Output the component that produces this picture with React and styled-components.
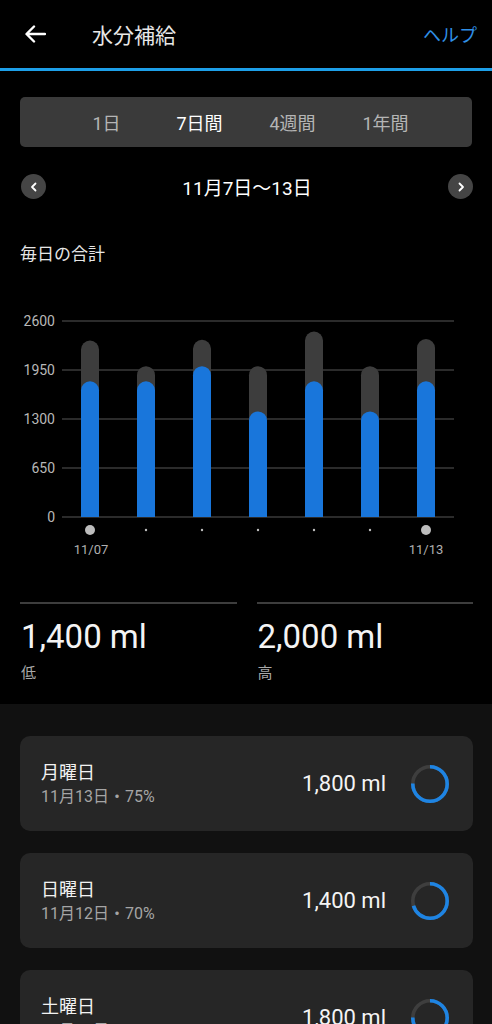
import React from 'react';
import styled, { createGlobalStyle } from 'styled-components';

const GlobalStyle = createGlobalStyle`
  body {
    margin: 0;
    background: #000;
    font-family: Roboto, 'Noto Sans CJK JP', sans-serif;
    color: #fff;
  }
`

const Page = styled.div`
  width: 492px;
  min-height: 1024px;
  background: #000;
  overflow: hidden;
`
const Header = styled.div`
  height: 68px;
  display: flex;
  align-items: center;
  padding: 0 15px 0 24px;
  border-bottom: 3px solid #1d9fe8;
`
const BackButton = styled.div`
  width: 24px;
  height: 24px;
  display: flex;
  align-items: center;
`
const Title = styled.h1`
  margin: 0 0 0 44px;
  font-size: 21px;
  font-weight: 400;
  color: #e8e8e8;
  flex: 1;
`
const Help = styled.span`
  font-size: 18px;
  color: #2f8fe6;
`
const Segment = styled.div`
  margin: 26px 20px 0;
  height: 50px;
  background: #3a3a3a;
  border-radius: 5px;
  display: grid;
  grid-template-columns: repeat(4, 93px);
  justify-content: center;
  align-items: center;
`
const SegItem = styled.span`
  text-align: center;
  font-size: 18px;
  color: ${p => (p.active ? '#fff' : '#b5b5b5')};
`
const DateNav = styled.div`
  margin: 27px 19px 0 21px;
  height: 25px;
  display: flex;
  align-items: center;
  justify-content: space-between;
`
const NavCircle = styled.div`
  width: 25px;
  height: 25px;
  border-radius: 50%;
  background: #454545;
  display: flex;
  align-items: center;
  justify-content: center;
`
const DateText = styled.span`
  font-size: 19px;
  color: #fff;
`
const SectionTitle = styled.h2`
  margin: 43px 0 0 20px;
  font-size: 17px;
  font-weight: 400;
  line-height: 24px;
  color: #e6e6e6;
`
const ChartSvg = styled.svg`
  display: block;
  margin-top: 33px;
`
const Stats = styled.div`
  margin: 41px 19px 0 20px;
  display: grid;
  grid-template-columns: 1fr 1fr;
  column-gap: 20px;
`
const Stat = styled.div`
  border-top: 2px solid #3d3d3d;
  padding: 14px 0 0 1px;
`
const StatValue = styled.div`
  font-size: 33px;
  line-height: 38px;
  color: #f4f4f4;
`
const StatLabel = styled.div`
  font-size: 15px;
  line-height: 22px;
  margin-top: 6px;
  color: #a8a8a8;
`
const Lower = styled.div`
  margin-top: 20px;
  background: #111;
  padding: 32px 19px 40px 20px;
  display: flex;
  flex-direction: column;
  gap: 22px;
`
const Card = styled.div`
  height: 95px;
  background: #262626;
  border-radius: 10px;
  display: flex;
  align-items: center;
  padding: 0 23px 0 21px;
`
const CardText = styled.div`
  flex: 1;
  display: flex;
  flex-direction: column;
`
const CardTitle = styled.span`
  font-size: 18px;
  line-height: 26px;
  color: #f2f2f2;
`
const CardSub = styled.span`
  font-size: 16px;
  line-height: 22px;
  color: #a5a5a5;
`
const CardValue = styled.span`
  font-size: 22px;
  color: #f4f4f4;
  margin-right: 24px;
`

const Arrow = () => (
  <svg width="22" height="20" viewBox="0 0 22 20">
    <path d="M21 10H3M10 2.5L2.5 10L10 17.5" fill="none" stroke="#fff" strokeWidth="2.4" strokeLinecap="round" strokeLinejoin="round" />
  </svg>
)

const Chevron = ({ dir }) => (
  <svg width="10" height="12" viewBox="0 0 10 12">
    <path d={dir === 'left' ? 'M6.5 2.5L3 6l3.5 3.5' : 'M3.5 2.5L7 6 3.5 9.5'} fill="none" stroke="#fff" strokeWidth="1.8" strokeLinecap="round" strokeLinejoin="round" />
  </svg>
)

const Ring = ({ pct }) => {
  const r = 17.2
  const c = 2 * Math.PI * r
  return (
    <svg width="40" height="40" viewBox="0 0 40 40">
      <circle cx="20" cy="20" r={r} fill="none" stroke="#3e3e3e" strokeWidth="3.6" />
      <circle
        cx="20" cy="20" r={r} fill="none" stroke="#1e84e3" strokeWidth="3.6"
        strokeDasharray={`${c * pct} ${c}`} transform="rotate(-90 20 20)"
      />
    </svg>
  )
}

const days = [
  { goal: 2340, val: 1800 },
  { goal: 2000, val: 1800 },
  { goal: 2350, val: 2000 },
  { goal: 2000, val: 1400 },
  { goal: 2460, val: 1800 },
  { goal: 2000, val: 1400 },
  { goal: 2360, val: 1800 },
]
const ticks = [2600, 1950, 1300, 650, 0]
const base = 218
const scale = 196 / 2600

const barPath = (cx, h, w) => {
  const r = w / 2
  const top = base - h
  return `M${cx - r} ${base}V${top + r}A${r} ${r} 0 0 1 ${cx + r} ${top + r}V${base}Z`
}

const Chart = () => (
  <ChartSvg width="492" height="262" viewBox="0 0 492 262">
    {ticks.map((t, i) => (
      <g key={t}>
        <line x1="62" x2="454" y1={22 + i * 49} y2={22 + i * 49} stroke="#3a3a3a" strokeWidth="1.3" />
        <text x="55" y={27 + i * 49} textAnchor="end" fontSize="14" fill="#b8b8b8" fontFamily="Roboto, sans-serif">{t}</text>
      </g>
    ))}
    {days.map((d, i) => {
      const cx = 90 + i * 56
      return (
        <g key={i}>
          <path d={barPath(cx, d.goal * scale, 18)} fill="#3d3d3d" />
          <path d={barPath(cx, d.val * scale, 18)} fill="#1976db" />
          {i === 0 || i === 6
            ? <circle cx={cx} cy="231" r="5" fill="#bdbdbd" />
            : <circle cx={cx} cy="231" r="1.2" fill="#bdbdbd" />}
        </g>
      )
    })}
    <text x="91" y="255" textAnchor="middle" fontSize="13" fill="#b0b0b0" fontFamily="Roboto, sans-serif">11/07</text>
    <text x="426" y="255" textAnchor="middle" fontSize="13" fill="#b0b0b0" fontFamily="Roboto, sans-serif">11/13</text>
  </ChartSvg>
)

const entries = [
  { day: '月曜日', sub: '11月13日・75%', value: '1,800 ml', pct: 0.75 },
  { day: '日曜日', sub: '11月12日・70%', value: '1,400 ml', pct: 0.7 },
  { day: '土曜日', sub: '11月11日・75%', value: '1,800 ml', pct: 0.75 },
]

const App = () => (
  <Page>
    <GlobalStyle />
    <Header>
      <BackButton><Arrow /></BackButton>
      <Title>水分補給</Title>
      <Help>ヘルプ</Help>
    </Header>
    <Segment>
      <SegItem>1日</SegItem>
      <SegItem active>7日間</SegItem>
      <SegItem>4週間</SegItem>
      <SegItem>1年間</SegItem>
    </Segment>
    <DateNav>
      <NavCircle><Chevron dir="left" /></NavCircle>
      <DateText>11月7日〜13日</DateText>
      <NavCircle><Chevron dir="right" /></NavCircle>
    </DateNav>
    <SectionTitle>毎日の合計</SectionTitle>
    <Chart />
    <Stats>
      <Stat>
        <StatValue>1,400 ml</StatValue>
        <StatLabel>低</StatLabel>
      </Stat>
      <Stat>
        <StatValue>2,000 ml</StatValue>
        <StatLabel>高</StatLabel>
      </Stat>
    </Stats>
    <Lower>
      {entries.map(e => (
        <Card key={e.day}>
          <CardText>
            <CardTitle>{e.day}</CardTitle>
            <CardSub>{e.sub}</CardSub>
          </CardText>
          <CardValue>{e.value}</CardValue>
          <Ring pct={e.pct} />
        </Card>
      ))}
    </Lower>
  </Page>
)

export default App;
